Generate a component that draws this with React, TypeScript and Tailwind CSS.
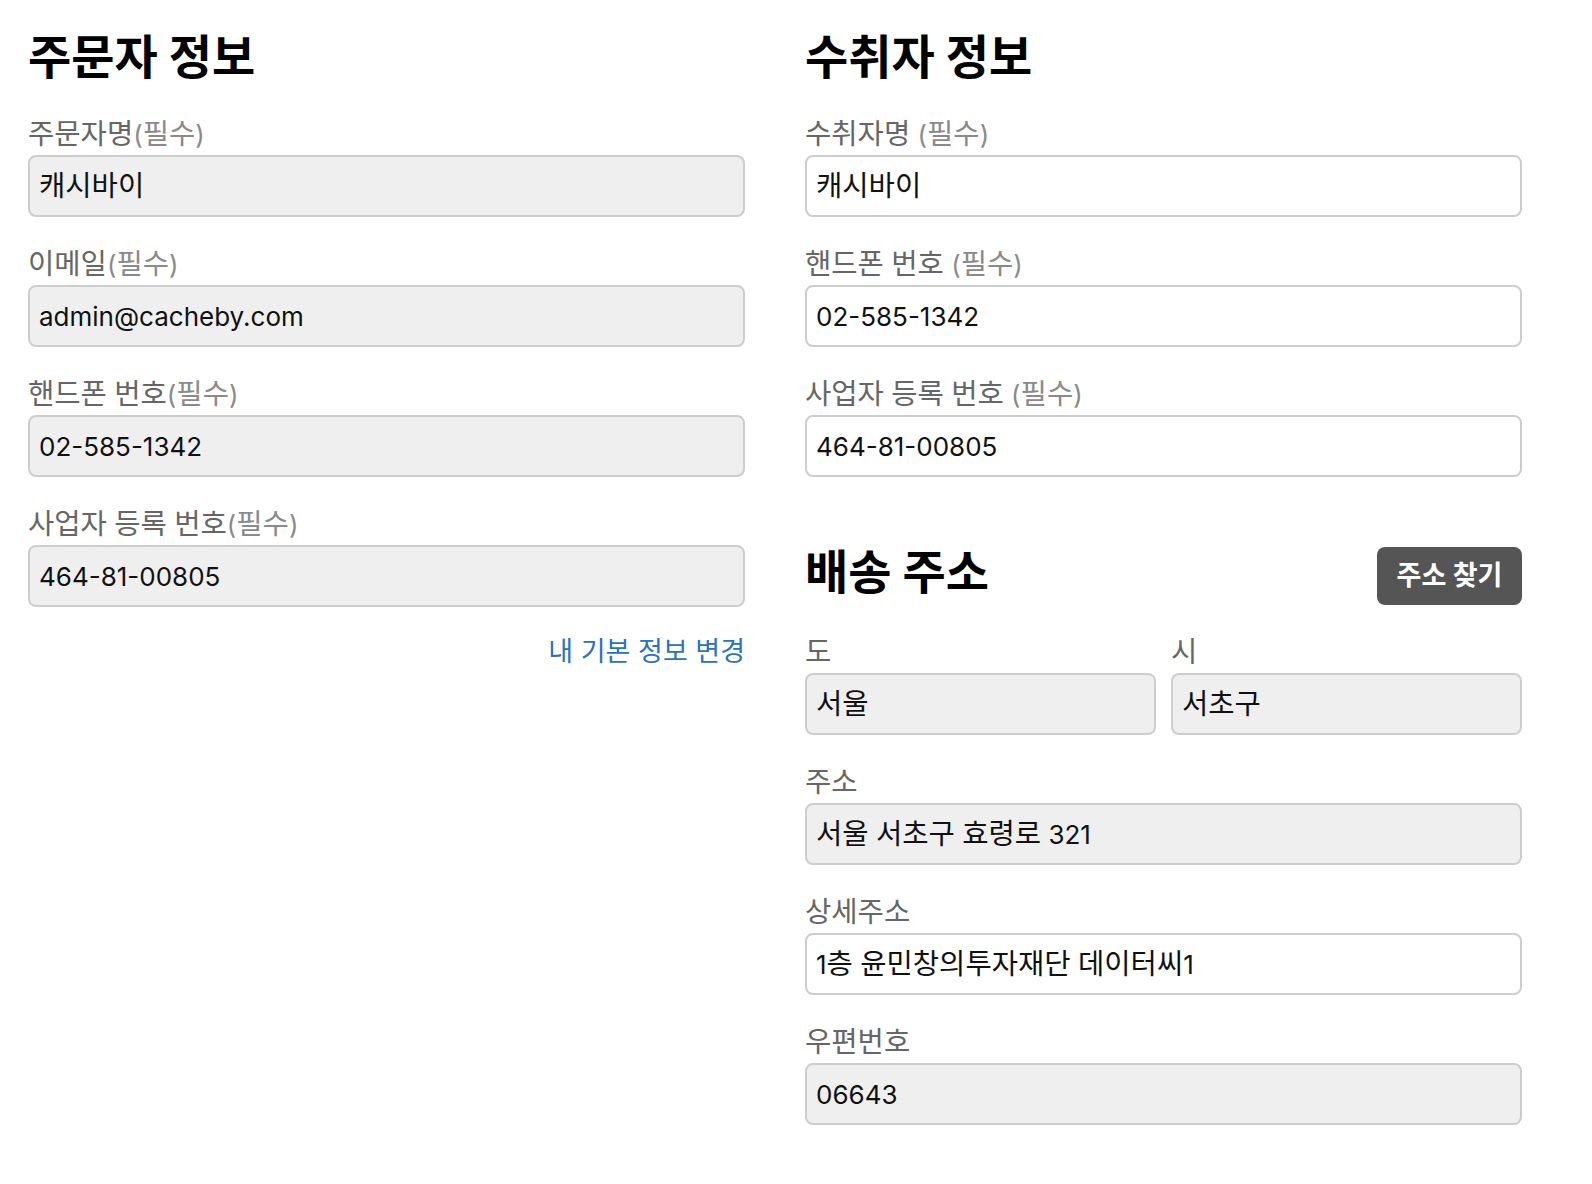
import React from "react";

const FONT = { fontFamily: 'Inter, "Noto Sans CJK KR", sans-serif' };

// Hangul in Noto renders narrower than the reference face, so bump Hangul runs a little
const K = ({ text }: { text: string }) => (
    <span>
        {text.split(/([\uAC00-\uD7A3]+)/).map((part, i) =>
            /[\uAC00-\uD7A3]/.test(part) ? (
                <span key={i} className="text-[1.1em]">
                    {part}
                </span>
            ) : (
                part
            )
        )}
    </span>
);

type FieldProps = {
    label: string;
    required?: boolean;
    spaced?: boolean;
    value: string;
    readOnly?: boolean;
};

const Field = ({ label, required, spaced, value, readOnly }: FieldProps) => (
    <div>
        <p className="h-[40px] leading-[40px] text-[26px] text-[#666] mb-px whitespace-pre overflow-hidden">
            <K text={label} />
            {required && (
                <span className="text-[#8a8a8a]">
                    <K text={spaced ? " (필수)" : "(필수)"} />
                </span>
            )}
        </p>
        <div
            className={[
                "w-full h-[62px] px-[9px] flex items-center rounded-[8px] border-2 border-[#cdcdcd] text-[26px] text-[#111] whitespace-pre overflow-hidden",
                readOnly ? "bg-[#efefef]" : "bg-white",
            ].join(" ")}
        >
            <K text={value} />
        </div>
    </div>
);

const App = () => {
    return (
        <div className="bg-white min-h-[1184px] pl-[28px] pt-[29px]" style={FONT}>
            <div className="w-[1494px] grid grid-cols-2 gap-x-[60px]">
                <div>
                    <h2 className="h-[56px] leading-[56px] text-[47px] font-bold text-black mb-[29px]">
                        주문자 정보
                    </h2>
                    <div className="flex flex-col gap-[27px]">
                        <Field label="주문자명" required value="캐시바이" readOnly />
                        <Field label="이메일" required value="admin@cacheby.com" readOnly />
                        <Field label="핸드폰 번호" required value="02-585-1342" readOnly />
                        <Field label="사업자 등록 번호" required value="464-81-00805" readOnly />
                    </div>
                    <div className="flex justify-end mt-[25px]">
                        <a className="h-[40px] leading-[40px] text-[27px] text-[#2b72be] cursor-pointer whitespace-nowrap">
                            내 기본 정보 변경
                        </a>
                    </div>
                </div>

                <div>
                    <h2 className="h-[56px] leading-[56px] text-[47px] font-bold text-black mb-[29px]">
                        수취자 정보
                    </h2>
                    <div className="flex flex-col gap-[27px]">
                        <Field label="수취자명" required spaced value="캐시바이" />
                        <Field label="핸드폰 번호" required spaced value="02-585-1342" />
                        <Field label="사업자 등록 번호" required spaced value="464-81-00805" />
                    </div>

                    <div className="flex items-center justify-between h-[58px] mt-[70px] mb-[27px]">
                        <h2 className="text-[47px] leading-[56px] font-bold text-black pb-[8px]">
                            배송 주소
                        </h2>
                        <button className="h-[58px] w-[145px] rounded-[8px] bg-[#555] text-white text-[27px] font-bold">
                            주소 찾기
                        </button>
                    </div>

                    <div className="flex flex-col gap-[27px]">
                        <div className="grid grid-cols-2 gap-x-[15px]">
                            <Field label="도" value="서울" readOnly />
                            <Field label="시" value="서초구" readOnly />
                        </div>
                        <Field label="주소" value="서울 서초구 효령로 321" readOnly />
                        <Field label="상세주소" value="1층 윤민창의투자재단 데이터씨1" />
                        <Field label="우편번호" value="06643" readOnly />
                    </div>
                </div>
            </div>
        </div>
    );
};

export default App;
